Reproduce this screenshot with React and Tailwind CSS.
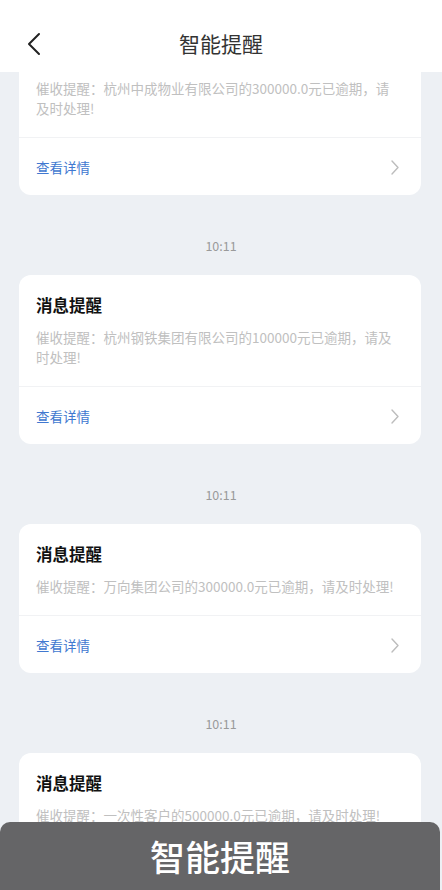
const notices = [
  { text: '催收提醒：杭州钢铁集团有限公司的100000元已逾期，请及时处理!' },
  { text: '催收提醒：万向集团公司的300000.0元已逾期，请及时处理!' },
  { text: '催收提醒：一次性客户的500000.0元已逾期，请及时处理!' },
]

function Chevron() {
  return (
    <svg width="12" height="16" viewBox="0 0 12 16" fill="none">
      <path d="M3 2l6 6.5L3 15" stroke="#bdbdbd" strokeWidth="1.4" strokeLinecap="round" strokeLinejoin="round" />
    </svg>
  )
}

function DetailRow() {
  return (
    <div className="border-t border-[#f1f2f4] h-[58px] flex items-center justify-between pl-[17px] pr-[20px]">
      <span className="text-[13.5px] leading-[20px] text-[#4178d0]">查看详情</span>
      <Chevron />
    </div>
  )
}

function Time() {
  return (
    <div className="h-[80px] pt-[43px] text-center text-[12.5px] leading-[16px] text-[#9a9a9a]">10:11</div>
  )
}

export default function App() {
  return (
    <div
      className="w-[442px] h-[890px] bg-[#edf0f4] relative overflow-hidden"
      style={{ fontFamily: '"Noto Sans CJK SC", "Noto Sans", sans-serif' }}
    >
      {/* Header */}
      <div className="h-[72px] bg-white pt-[16px] flex items-center relative">
        <button className="ml-[22px] w-[24px] h-[28px] flex items-center justify-center">
          <svg width="16" height="24" viewBox="0 0 16 24" fill="none">
            <path d="M13 2L3 12l10 10" stroke="#222" strokeWidth="2" strokeLinecap="round" strokeLinejoin="round" />
          </svg>
        </button>
        <div className="flex-1 text-center text-[21px] text-[#333] mr-[46px]">智能提醒</div>
      </div>

      {/* First card, partly scrolled away */}
      <div className="ml-[19px] w-[402px] bg-white rounded-b-[12px]">
        <div className="pt-[6px] pb-[19px] pl-[17px] pr-[20px] text-[13.5px] leading-[20px] text-[#c0c0c0]">
          催收提醒：杭州中成物业有限公司的300000.0元已逾期，请及时处理!
        </div>
        <div className="border-t border-[#f1f2f4] h-[58px] flex items-center justify-between pl-[17px] pr-[20px]">
          <span className="text-[13.5px] leading-[20px] text-[#4178d0]">查看详情</span>
          <Chevron />
        </div>
      </div>

      {notices.map((n, i) => (
        <div key={i}>
          <Time />
          <div className="ml-[19px] w-[402px] bg-white rounded-[12px]">
            <div className="pt-[20px] pb-[19px] pl-[17px] pr-[20px]">
              <div className="text-[16.5px] leading-[20px] font-bold text-[#111]">消息提醒</div>
              <div className="mt-[12px] text-[13.5px] leading-[20px] text-[#c0c0c0]">{n.text}</div>
            </div>
            <DetailRow />
          </div>
        </div>
      ))}

      {/* Toast */}
      <div className="absolute left-0 bottom-0 w-[440px] h-[68px] rounded-t-[10px] bg-[#656567] flex items-center justify-center">
        <span className="text-[35px] leading-[40px] font-medium text-white">智能提醒</span>
      </div>
    </div>
  )
}
